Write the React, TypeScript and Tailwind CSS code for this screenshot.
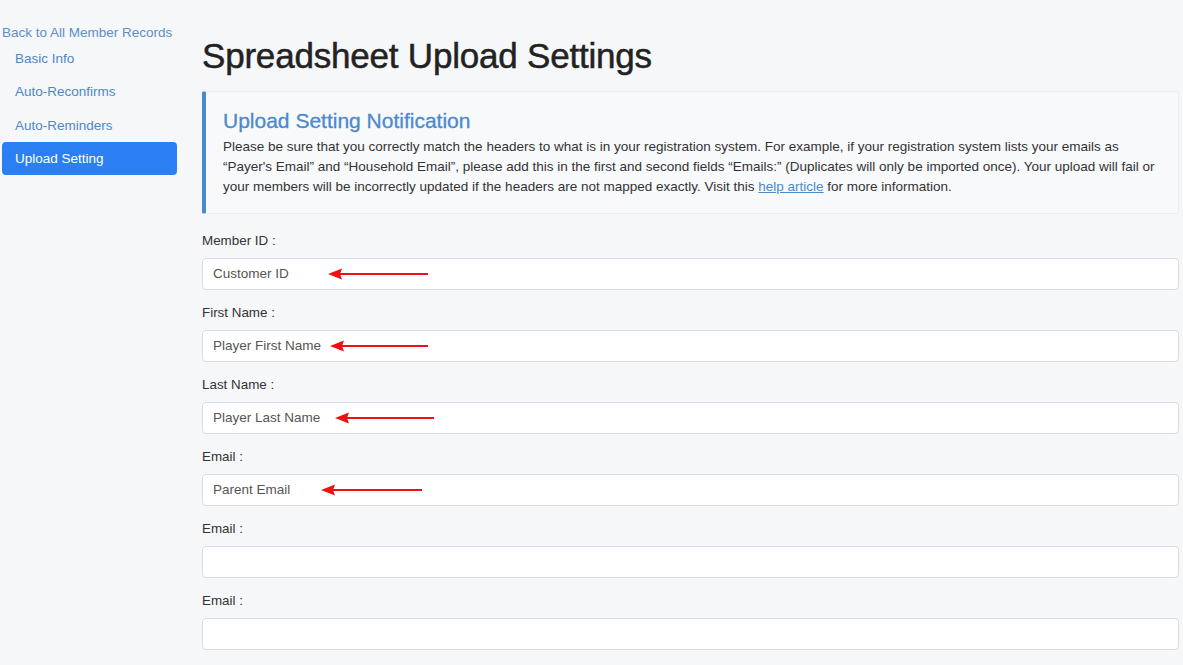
import React from "react";

function Arrow({ left, width }: { left: number; width: number }) {
  return (
    <svg
      className="absolute top-1/2 -translate-y-1/2"
      style={{ left }}
      width={width}
      height={12}
      viewBox={`0 0 ${width} 12`}
    >
      <polygon points="0,6 14,0.5 12,6 14,11.5" fill="#ee1111" />
      <line x1={10} y1={6} x2={width} y2={6} stroke="#ee1111" strokeWidth={2} />
    </svg>
  );
}

function Field({
  label,
  value,
  arrow,
}: {
  label: string;
  value?: string;
  arrow?: { left: number; width: number };
}) {
  return (
    <div className="flex flex-col">
      <div className="text-[13.4px] leading-[16px] h-[16px] text-[#333] mb-[9px]">{label}</div>
      <div className="relative h-[32px] rounded-[4px] border border-[#d9dce0] bg-white flex items-center px-[10px] text-[13.5px] text-[#555]">
        {value}
        {arrow && <Arrow left={arrow.left} width={arrow.width} />}
      </div>
    </div>
  );
}

export default function App() {
  return (
    <div
      className="min-h-[665px] w-full bg-[#f6f7f9] flex"
      style={{ fontFamily: '"Liberation Sans", Arial, sans-serif' }}
    >
      <aside className="w-[202px] shrink-0 pl-[2px] pt-[25px]">
        <a className="block text-[13.5px] leading-[16px] text-[#5a8fcb]">Back to All Member Records</a>
        <nav className="mt-[1px] w-[175px] flex flex-col">
          <a className="block h-[33px] leading-[33px] pl-[13px] text-[13.5px] text-[#4f87c6]">Basic Info</a>
          <a className="block h-[34px] leading-[34px] pl-[13px] text-[13.5px] text-[#4f87c6]">Auto-Reconfirms</a>
          <a className="block h-[33px] leading-[33px] pl-[13px] text-[13.5px] text-[#4f87c6]">Auto-Reminders</a>
          <a className="block h-[33px] leading-[33px] pl-[13px] text-[13.5px] text-white bg-[#2b7ff3] rounded-[4px]">Upload Setting</a>
        </nav>
      </aside>
      <main className="flex-1 pr-[4px] pt-[36px]">
        <h1 className="text-[35px] leading-[40px] text-[#222] font-normal tracking-[-0.2px] [-webkit-text-stroke:0.5px_#222]">Spreadsheet Upload Settings</h1>
        <div className="mt-[15px] border border-[#ebedf0] border-l-[4px] border-l-[#4a89cd] bg-[#f8f9fb] rounded-[2px] pl-[17px] pr-[16px] pt-[17px] pb-[16px]">
          <h2 className="text-[21px] leading-[24px] text-[#4a89cd] [-webkit-text-stroke:0.3px_#4a89cd]">Upload Setting Notification</h2>
          <p className="mt-[4px] text-[13.5px] leading-[20px] text-[#333]">
            Please be sure that you correctly match the headers to what is in your registration system. For example, if your registration system lists your emails as “Payer's Email” and “Household Email”, please add this in the first and second fields “Emails:” (Duplicates will only be imported once). Your upload will fail or your members will be incorrectly updated if the headers are not mapped exactly. Visit this{" "}
            <a className="text-[#4a89cd] underline">help article</a> for more information.
          </p>
        </div>
        <div className="mt-[19px] flex flex-col gap-[15px]">
          <Field label="Member ID :" value="Customer ID" arrow={{ left: 125, width: 100 }} />
          <Field label="First Name :" value="Player First Name" arrow={{ left: 127, width: 98 }} />
          <Field label="Last Name :" value="Player Last Name" arrow={{ left: 132, width: 99 }} />
          <Field label="Email :" value="Parent Email" arrow={{ left: 118, width: 101 }} />
          <Field label="Email :" />
          <Field label="Email :" />
        </div>
      </main>
    </div>
  );
}
